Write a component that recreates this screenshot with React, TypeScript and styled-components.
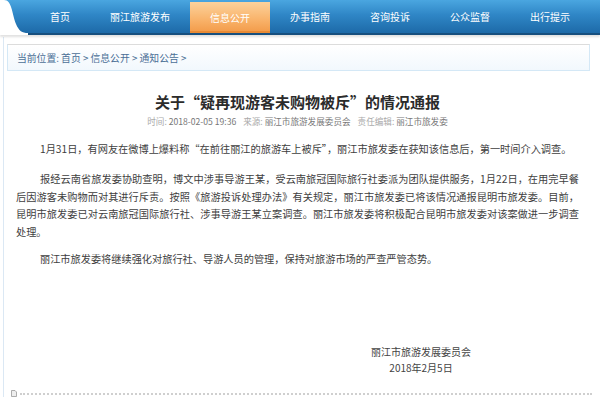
import styled, { createGlobalStyle } from "styled-components";

const GlobalStyle = createGlobalStyle`
  html, body {
    margin: 0;
    padding: 0;
    background: #fff;
  }
  body {
    font-family: "Noto Sans CJK SC", "Noto Sans", sans-serif;
  }
`;

const Page = styled.div`
  width: 600px;
  height: 397px;
  overflow: hidden;
  background: #fff;
`;

const NavBar = styled.div`
  position: relative;
  display: flex;
  height: 33px;
  padding-left: 30px;
  background: linear-gradient(#4aa6e0 0%, #2f86c6 45%, #1d6aa8 100%);
  border-bottom: 2px solid #174f7e;
  box-shadow: 0 2px 2px rgba(0, 0, 0, 0.12);
`;

const NavCorner = styled.svg`
  position: absolute;
  left: 0;
  top: 0;
`;

const NavItem = styled.div<{ $active?: boolean }>`
  display: flex;
  align-items: center;
  height: ${({ $active }) => ($active ? "31px" : "33px")};
  margin-top: ${({ $active }) => ($active ? "2px" : "0")};
  padding: 0 20px;
  font-size: 10px;
  color: #fff;
  white-space: nowrap;
  background: ${({ $active }) =>
    $active ? "linear-gradient(#fcd29c 0%, #f9b46c 55%, #f29a48 100%)" : "none"};
  box-shadow: ${({ $active }) => ($active ? "inset 0 -2px 0 #e88a35" : "none")};
`;

const Main = styled.div`
  margin-left: 3px;
  margin-top: 2px;
  padding: 7px 10px 0 3px;
  border-left: 1px solid #dbe8f4;
  height: 353px;
  display: flex;
  flex-direction: column;
`;

const Breadcrumb = styled.div`
  height: 25px;
  display: flex;
  align-items: center;
  padding-left: 9px;
  border: 1px solid #d4e8f6;
  border-top-color: #dcdcdc;
  background: linear-gradient(#fff 0%, #f2f8fd 100%);
  font-size: 9.8px;
  color: #4b6f96;
`;

const Article = styled.div`
  padding: 0 11px 0 9px;
  flex: 1;
  display: flex;
  flex-direction: column;
`;

const Title = styled.h1`
  margin: 21px 0 0;
  text-align: center;
  font-size: 15px;
  line-height: 20px;
  font-weight: bold;
  color: #2b2b2b;
`;

const Meta = styled.div`
  margin-top: 2px;
  text-align: center;
  font-size: 8.6px;
  line-height: 14px;
  color: #777;
`;

const MetaLabel = styled.span`
  color: #aaa;
  margin-left: 5px;
  &:first-child {
    margin-left: 0;
  }
`;

const Paragraph = styled.p<{ $gap?: number }>`
  margin: ${({ $gap }) => $gap ?? 12}px 0 0;
  text-indent: 24px;
  font-size: 10.2px;
  line-height: 17.4px;
  color: #3e3e3e;
  text-align: justify;
`;

const Signature = styled.div`
  margin-top: auto;
  margin-bottom: 14px;
  align-self: flex-end;
  width: 140px;
  margin-right: 88px;
  text-align: center;
  font-size: 10px;
  line-height: 16px;
  color: #444;
`;

const Footer = styled.div`
  display: flex;
  align-items: center;
  gap: 3px;
  height: 7px;
  margin-left: 4px;
  margin-right: -2px;
`;

const DottedLine = styled.div`
  flex: 1;
  border-top: 2px dotted #cfcfcf;
`;

const navItems = ["首页", "丽江旅游发布", "信息公开", "办事指南", "咨询投诉", "公众监督", "出行提示"];

function DocIcon() {
  return (
    <svg width="6" height="7" viewBox="0 0 6 7">
      <path d="M0.5 0.5h3.5l1.5 1.5v4.5h-5z" fill="#eee" stroke="#999" strokeWidth="0.8" />
    </svg>
  );
}

export default function App() {
  return (
    <Page>
      <GlobalStyle />
      <NavBar>
        <NavCorner width="28" height="35" viewBox="0 0 28 35">
          <path d="M0 0 H4 C12 0 12 14 16 24 C19 31 22 33 28 33 V35 H0 Z" fill="#fff" />
        </NavCorner>
        {navItems.map((item) => (
          <NavItem key={item} $active={item === "信息公开"}>
            {item}
          </NavItem>
        ))}
      </NavBar>
      <Main>
        <Breadcrumb>当前位置: 首页 &gt; 信息公开 &gt; 通知公告 &gt;</Breadcrumb>
        <Article>
          <Title>关于“疑再现游客未购物被斥”的情况通报</Title>
          <Meta>
            <MetaLabel>时间:</MetaLabel> 2018-02-05 19:36 <MetaLabel>来源:</MetaLabel> 丽江市旅游发展委员会{" "}
            <MetaLabel>责任编辑:</MetaLabel> 丽江市旅发委
          </Meta>
          <Paragraph>
            1月31日，有网友在微博上爆料称“在前往丽江的旅游车上被斥”，丽江市旅发委在获知该信息后，第一时间介入调查。
          </Paragraph>
          <Paragraph $gap={13}>
            报经云南省旅发委协助查明，博文中涉事导游王某，受云南旅冠国际旅行社委派为团队提供服务，1月22日，在用完早餐后因游客未购物而对其进行斥责。按照《旅游投诉处理办法》有关规定，丽江市旅发委已将该情况通报昆明市旅发委。目前，昆明市旅发委已对云南旅冠国际旅行社、涉事导游王某立案调查。丽江市旅发委将积极配合昆明市旅发委对该案做进一步调查处理。
          </Paragraph>
          <Paragraph $gap={10}>
            丽江市旅发委将继续强化对旅行社、导游人员的管理，保持对旅游市场的严查严管态势。
          </Paragraph>
          <Signature>
            丽江市旅游发展委员会
            <br />
            2018年2月5日
          </Signature>
        </Article>
        <Footer>
          <DocIcon />
          <DottedLine />
        </Footer>
      </Main>
    </Page>
  );
}
